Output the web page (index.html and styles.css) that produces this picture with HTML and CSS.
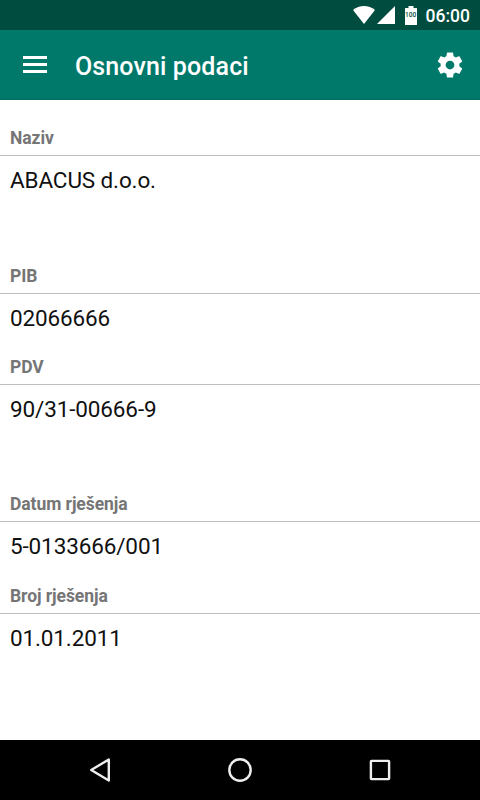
FILE: index.html
```html
<!DOCTYPE html>
<html lang="sr-Latn">
<head>
<meta charset="utf-8">
<title>Osnovni podaci</title>
<link rel="stylesheet" href="styles.css">
</head>
<body>
<div class="screen">
  <div class="status">
    <svg class="wifi" width="22" height="18" viewBox="0 0 22 18"><path d="M0 4C6.500-1.200 15.500-1.200 22 4L11 18Z"/></svg>
    <svg class="signal" width="18" height="18" viewBox="0 0 18 18"><path d="M18 0V18H0Z"/></svg>
    <div class="battery">
      <svg width="12" height="19" viewBox="0 0 12 19"><path d="M3.500 0H8.500V2H11.500Q12 2 12 2.500V18.500Q12 19 11.500 19H.5Q0 19 0 18.500V2.500Q0 2 .5 2H3.500Z"/></svg>
      <span class="level">100</span>
    </div>
    <span class="clock">06:00</span>
  </div>
  <header class="bar">
    <svg class="menu" width="24" height="17" viewBox="0 0 24 17"><path d="M0 0H24V3H0ZM0 7H24V10H0ZM0 14H24V17H0Z"/></svg>
    <h1>Osnovni podaci</h1>
    <svg class="gear" width="30" height="30" viewBox="0 0 24 24"><path d="M19.430 12.980c.040-.320.070-.640.070-.980s-.030-.660-.070-.980l2.110-1.650c.190-.150.240-.420.120-.640l-2-3.460c-.120-.220-.390-.300-.610-.220l-2.490 1c-.520-.400-1.080-.730-1.690-.980l-.380-2.650C14.460 2.180 14.250 2 14 2h-4c-.250 0-.460.180-.490.420l-.380 2.650c-.610.250-1.170.590-1.690.980l-2.490-1c-.230-.090-.490 0-.610.220l-2 3.460c-.130.220-.070.490.120.640l2.110 1.650c-.040.320-.070.650-.070.980s.030.660.070.980l-2.110 1.650c-.190.150-.240.420-.120.640l2 3.460c.120.220.390.300.610.220l2.490-1c.520.400 1.080.730 1.690.980l.380 2.650c.030.240.240.420.490.420h4c.250 0 .460-.180.490-.420l.380-2.650c.610-.250 1.170-.590 1.690-.980l2.490 1c.230.090.490 0 .610-.220l2-3.460c.120-.220.070-.490-.120-.640l-2.110-1.650zM12 15.500c-1.930 0-3.500-1.570-3.500-3.500s1.570-3.500 3.500-3.500 3.500 1.570 3.500 3.500-1.570 3.500-3.500 3.500z"/></svg>
  </header>
  <main class="content">
    <dl class="group">
      <div class="field"><dt>Naziv</dt><dd>ABACUS d.o.o.</dd></div>
    </dl>
    <dl class="group">
      <div class="field"><dt>PIB</dt><dd>02066666</dd></div>
      <div class="field"><dt>PDV</dt><dd>90/31-00666-9</dd></div>
    </dl>
    <dl class="group">
      <div class="field"><dt>Datum rješenja</dt><dd>5-0133666/001</dd></div>
      <div class="field"><dt>Broj rješenja</dt><dd>01.01.2011</dd></div>
    </dl>
  </main>
  <nav class="nav">
    <svg width="30" height="30" viewBox="0 0 30 30"><path d="M23.800 4.500V25.500L6.200 15Z"/></svg>
    <svg width="30" height="30" viewBox="0 0 30 30"><circle cx="15" cy="15" r="10.700"/></svg>
    <svg width="30" height="30" viewBox="0 0 30 30"><rect x="5.900" y="5.900" width="18.200" height="18.200" rx=".6"/></svg>
  </nav>
</div>
</body>
</html>
```

FILE: styles.css
```css
* { box-sizing: border-box; }
body { margin: 0; font-family: Roboto, sans-serif; background: #fff; }
svg { display: block; fill: #fff; flex: none; }
.screen { display: flex; flex-direction: column; width: 480px; height: 800px; overflow: hidden; }
.status { height: 30px; flex: none; display: flex; align-items: center; justify-content: flex-end; padding-right: 10px; background: #004d40; color: #fff; }
.signal { margin-left: 2px; }
.battery { position: relative; margin: 0 9px 0 10px; }
.level { position: absolute; left: 0; top: 5px; width: 12px; text-align: center; font-size: 6.5px; line-height: 8px; font-weight: 500; color: #004d40; }
.clock { font-size: 17.5px; font-weight: 500; line-height: 20px; padding-top: 2px; }
.bar { height: 70px; flex: none; display: flex; align-items: center; padding: 0 15px 0 23px; background: #00796b; border-bottom: 1px solid #00695c; color: #fff; }
.bar h1 { flex: 1; margin: 5px 0 0 28px; font-size: 25px; line-height: 30px; font-weight: 500; letter-spacing: .12px; }
.content { flex: 1; padding-top: 20px; }
.group { margin: 0 0 46.25px; }
.field { height: 91.25px; }
dt { height: 36px; padding: 8px 10px 0; border-bottom: 1px solid #bdbdbd; font-size: 17.5px; line-height: 20px; font-weight: 700; letter-spacing: -.07px; color: #757575; }
dd { margin: 0; padding: 11px 10px 0; font-size: 22.5px; line-height: 26px; letter-spacing: -.13px; color: #111; }
.nav { height: 60px; flex: none; display: flex; align-items: center; justify-content: space-between; padding: 0 85px; background: #000; }
.nav svg { fill: none; stroke: #eee; stroke-width: 2.4; stroke-linejoin: round; }
```
